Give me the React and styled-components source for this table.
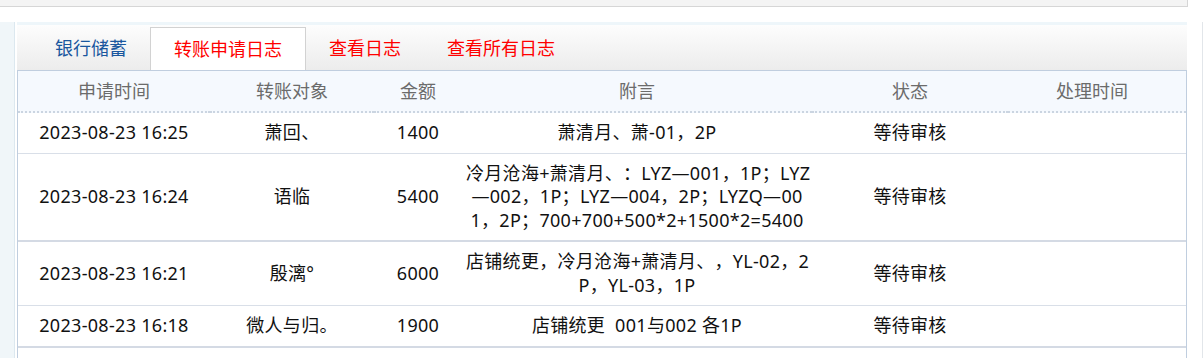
import styled, { createGlobalStyle } from "styled-components";

const GlobalStyle = createGlobalStyle`
  body {
    margin: 0;
    background: #fff;
    font-family: "Noto Sans", "Noto Sans CJK SC", sans-serif;
    text-spacing-trim: space-all;
  }
`;

const Page = styled.div`
  width: 1203px;
`;

const TopStrip = styled.div`
  width: 1187px;
  height: 6px;
  background: #f4f4f4;
  border-bottom: 1px solid #d6d6d6;
  border-right: 1px solid #d6d6d6;
  margin-bottom: 15px;
`;

const Main = styled.div`
  display: flex;
  min-height: 336px;
`;

const Rail = styled.div`
  width: 14px;
  background: #f0f6f9;
  border-right: 1px solid #dce8ef;
  margin-right: 2px;
`;

const Panel = styled.div`
  width: 1170px;
  display: flex;
  flex-direction: column;
`;

const Gutter = styled.div`
  flex: 1;
  border-right: 1px solid #e2e6ea;
`;

const TabBar = styled.div`
  display: flex;
  align-items: flex-end;
  height: 45px;
  padding-left: 15px;
  border-top: 3px solid #eef6fa;
  background: linear-gradient(#fdfdfd, #ececec);
`;

const Tab = styled.div`
  height: ${({ $active }) => ($active ? "42px" : "43px")};
  line-height: 42px;
  padding: 0 23px;
  font-size: 18px;
  white-space: nowrap;
  color: ${({ $tone }) => ($tone === "blue" ? "#1a579e" : "#ff0000")};
  background: ${({ $active }) => ($active ? "#fff" : "transparent")};
  border: ${({ $active }) => ($active ? "1px solid #d2d2d2" : "none")};
  border-bottom: none;
  cursor: pointer;
`;

const TableBox = styled.div`
  flex: 1;
  border: 1px solid #c0cedf;
  border-bottom: none;
`;

const Table = styled.table`
  width: 100%;
  table-layout: fixed;
  border-collapse: separate;
  border-spacing: 0;
  font-size: 18px;
`;

const Th = styled.th`
  padding: 1px ${({ $last }) => ($last ? "14px" : "4px")} 0 4px;
  line-height: 39px;
  font-weight: normal;
  color: #6b6b6b;
  background: #f5f9fe;
  border-bottom: 2px dotted #cbd5e1;
  text-align: center;
`;

const Row = styled.tr`
  td {
    border-bottom: ${({ $thick }) => ($thick ? "2px solid #d4dae4" : "1px solid #d9dfe8")};
  }
`;

const Td = styled.td`
  padding: 8px ${({ $last }) => ($last ? "14px" : "4px")} 8px 4px;
  line-height: 23.5px;
  letter-spacing: 0.3px;
  color: #111;
  text-align: center;
  vertical-align: middle;
`;

const NoteLine = styled.span`
  display: block;
  white-space: nowrap;
`;

const tabs = [
  { label: "银行储蓄", tone: "blue" },
  { label: "转账申请日志", tone: "red", active: true },
  { label: "查看日志", tone: "red" },
  { label: "查看所有日志", tone: "red" },
];

const columns = [
  { title: "申请时间", width: 192 },
  { title: "转账对象", width: 164 },
  { title: "金额", width: 88 },
  { title: "附言", width: 350 },
  { title: "状态", width: 196 },
  { title: "处理时间", width: 178 },
];

const rows = [
  {
    time: "2023-08-23 16:25",
    target: "萧回、",
    amount: 1400,
    note: ["萧清月、萧-01，2P"],
    status: "等待审核",
  },
  {
    time: "2023-08-23 16:24",
    target: "语临",
    amount: 5400,
    note: [
      "冷月沧海+萧清月、：LYZ—001，1P；LYZ",
      "—002，1P；LYZ—004，2P；LYZQ—00",
      "1，2P；700+700+500*2+1500*2=5400",
    ],
    status: "等待审核",
  },
  {
    time: "2023-08-23 16:21",
    target: "殷漓°",
    amount: 6000,
    note: ["店铺统更，冷月沧海+萧清月、，YL-02，2", "P，YL-03，1P"],
    status: "等待审核",
  },
  {
    time: "2023-08-23 16:18",
    target: "微人与归。",
    amount: 1900,
    note: ["店铺统更\u00a0 001与002 各1P"],
    status: "等待审核",
  },
];

const App = () => {
  return (
    <Page>
      <GlobalStyle />
      <TopStrip />
      <Main>
        <Rail />
        <Panel>
          <TabBar>
            {tabs.map((t) => (
              <Tab key={t.label} $tone={t.tone} $active={t.active}>
                {t.label}
              </Tab>
            ))}
          </TabBar>
          <TableBox>
            <Table>
              <colgroup>
                {columns.map((c) => (
                  <col key={c.title} style={{ width: c.width }} />
                ))}
              </colgroup>
              <thead>
                <tr>
                  {columns.map((c, i) => (
                    <Th key={c.title} $last={i === columns.length - 1}>
                      {c.title}
                    </Th>
                  ))}
                </tr>
              </thead>
              <tbody>
                {rows.map((r, i) => (
                  <Row key={r.time} $thick={i % 2 === 1}>
                    <Td>{r.time}</Td>
                    <Td>{r.target}</Td>
                    <Td>{r.amount}</Td>
                    <Td>
                      {r.note.map((line) => (
                        <NoteLine key={line}>{line}</NoteLine>
                      ))}
                    </Td>
                    <Td>{r.status}</Td>
                    <Td $last />
                  </Row>
                ))}
              </tbody>
            </Table>
          </TableBox>
        </Panel>
        <Gutter />
      </Main>
    </Page>
  );
};

export default App;
